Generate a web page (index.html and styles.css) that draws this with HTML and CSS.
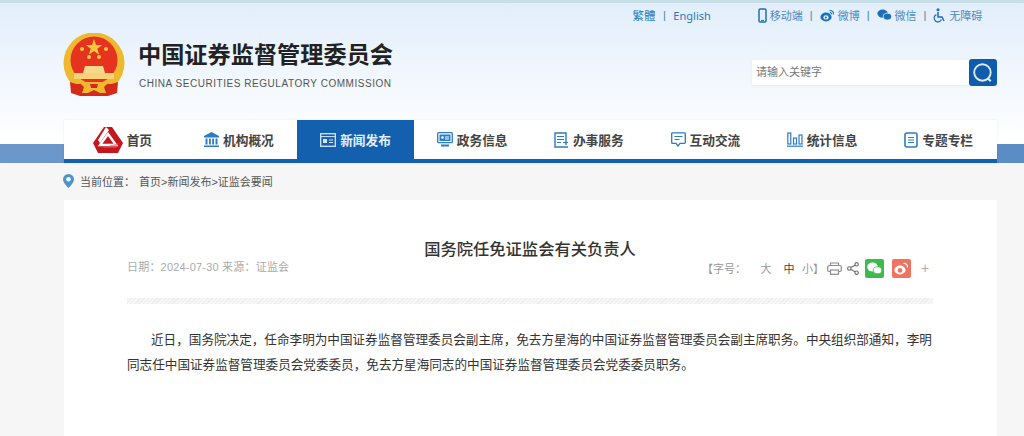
FILE: index.html
```html
<!DOCTYPE html>
<html lang="zh">
<head>
    <meta charset="UTF-8">
    <title>国务院任免证监会有关负责人</title>
    <link rel="stylesheet" href="styles.css">
</head>
<body>
    <div class="header">
        <div class="wrap">
            <div class="top-links">
                <a class="lang">繁體</a><i class="sep sep-lang">|</i><a class="lang lang-en">English</a>
                <span class="top-tools">
                    <a class="tool">
                        <svg width="9" height="15" viewBox="0 0 9 15"><rect x="1" y="1" width="7" height="13" rx="1.2" fill="none" stroke="#1d6fb8" stroke-width="1.5"/><path d="M3 12.4h3" stroke="#1d6fb8"/></svg>移动端</a><i class="sep">|</i>
                    <a class="tool">
                        <svg width="15" height="13" viewBox="0 0 15 13"><ellipse cx="6" cy="8" rx="5.6" ry="4.4" fill="#1d6fb8"/><ellipse cx="6" cy="8.4" rx="2.6" ry="2.2" fill="#eaf3fc"/><circle cx="5.8" cy="8.6" r="1.1" fill="#1d6fb8"/><path d="M9.5 1.5c2.6-.4 4.4 1.6 3.9 4M9.8 3.6c1.2-.2 2 .7 1.8 1.8" fill="none" stroke="#1d6fb8" stroke-width="1.1"/></svg>微博</a><i class="sep">|</i>
                    <a class="tool">
                        <svg width="15" height="12" viewBox="0 0 15 12"><ellipse cx="5.6" cy="4.6" rx="5.2" ry="4.2" fill="#1d6fb8"/><ellipse cx="10.4" cy="7.6" rx="4.2" ry="3.4" fill="#1d6fb8" stroke="#eaf3fc" stroke-width=".8"/></svg>微信</a><i class="sep">|</i>
                    <a class="tool">
                        <svg width="13" height="15" viewBox="0 0 13 15"><circle cx="5" cy="1.8" r="1.5" fill="#1d6fb8"/><path d="M5 4v5h4l2 4" fill="none" stroke="#1d6fb8" stroke-width="1.5"/><path d="M3.4 6.6a3.8 3.8 0 1 0 5 5" fill="none" stroke="#1d6fb8" stroke-width="1.2"/></svg>无障碍</a>
                </span>
            </div>
            <div class="brand-row">
                <svg class="emblem" width="62" height="64" viewBox="0 0 62 64">
                    <circle cx="31" cy="30" r="30.5" fill="#efb92f"/>
                    <circle cx="31" cy="27" r="23.5" fill="#e5331f"/>
                    <path d="m31 6 2 6h6.300l-5 3.700 1.900 6-5.200-3.700-5.200 3.700 1.900-6-5-3.700H29z" fill="#f6c93c"/>
                    <g fill="#f6c93c">
                        <circle cx="19" cy="16" r="2"/><circle cx="43" cy="16" r="2"/>
                        <circle cx="26" cy="24" r="2"/><circle cx="36" cy="24" r="2"/>
                    </g>
                    <path d="M22 33h18l2 7H20z" fill="#f7d98c"/>
                    <path d="M11 40h40v6H11z" fill="#f7d27a"/>
                    <path d="M7 49c5 2 10 3 14 1l20 0c4 2 9 1 14-1l-1 11-9 3H17l-9-3z" fill="#d42a1b"/>
                    <path d="M16 49h30l-5 5 2 6h-6l-6-3-6 3h-6l2-6z" fill="#efb92f"/>
                    <path d="M27 51h8l-1 4h-6z" fill="#d42a1b"/>
                </svg>
                <div class="brand-text">
                    <div class="brand-cn">中国证券监督管理委员会</div>
                    <div class="brand-en">CHINA SECURITIES REGULATORY COMMISSION</div>
                </div>
                <div class="search">
                    <div class="search-input">请输入关键字</div>
                    <div class="search-btn">
                        <svg width="22" height="22" viewBox="0 0 20 20"><circle cx="9.500" cy="9.500" r="7.500" fill="none" stroke="#dcebf8" stroke-width="1.700"/><path d="m14.500 15 2.500 2.500" stroke="#dcebf8" stroke-width="2"/></svg>
                    </div>
                </div>
            </div>
            <div class="nav">
                <a class="nav-item">
                    <svg width="30" height="28" viewBox="0 0 30 28">
                        <path d="M11 1h8l11 16-5 10H5L0 17z" fill="#c6161d"/>
                        <path d="M15 8l8 11H7z" fill="none" stroke="#fff" stroke-width="2.400"/>
                        <path d="M13 1 5 14l2 3 9-13z" fill="#fff"/>
                        <path d="M26 17 8 22h15z" fill="#e8555b" opacity=".6"/>
                    </svg>首页</a>
                <a class="nav-item">
                    <svg width="15" height="15" viewBox="0 0 15 15" fill="#2b7cc0"><path d="M7.500 0 15 4v1.500H0V4z"/><path d="M1.500 6.500h2v6h-2zM5 6.500h1.800v6H5zM8.200 6.500H10v6H8.200zM11.500 6.500h2v6h-2zM0 13.500h15V15H0z"/></svg>机构概况</a>
                <a class="nav-item active">
                    <svg width="16" height="14" viewBox="0 0 16 14"><rect x=".7" y=".7" width="14.600" height="12.600" fill="none" stroke="#d5e6f6" stroke-width="1.300"/><path d="M1 3.600h14" stroke="#d5e6f6"/><rect x="3" y="6" width="4" height="4" fill="#d5e6f6"/><path d="M9 7h4M9 9.500h4" stroke="#d5e6f6"/></svg>新闻发布</a>
                <a class="nav-item">
                    <svg width="16" height="15" viewBox="0 0 16 15"><rect x=".7" y=".7" width="14.600" height="10" rx="1" fill="none" stroke="#2b7cc0" stroke-width="1.300"/><rect x="2.500" y="2.500" width="11" height="6.500" fill="#2b7cc0"/><circle cx="5.500" cy="5.500" r="1.300" fill="#fff"/><path d="M8 5h4M8 7h4" stroke="#fff"/><path d="M4 13.500h8" stroke="#2b7cc0" stroke-width="2"/></svg>政务信息</a>
                <a class="nav-item">
                    <svg width="15" height="16" viewBox="0 0 15 16"><path d="M12 13V1H1v14h13" fill="none" stroke="#2b7cc0" stroke-width="1.400"/><path d="M3 4.500h7M3 7.500h7M3 10.500h4M9 10.500h5" stroke="#2b7cc0" stroke-width="1.200"/></svg>办事服务</a>
                <a class="nav-item">
                    <svg width="15" height="15" viewBox="0 0 15 15"><path d="M1.500.8h12a.8.8 0 0 1 .8.8v9a.8.800 0 0 1-.8.800H9l-2 2.600-2-2.600H1.500a.8.800 0 0 1-.8-.8v-9a.8.800 0 0 1 .8-.8z" fill="none" stroke="#2b7cc0" stroke-width="1.300"/><path d="M3.500 4.500h8M3.500 7.500h5" stroke="#2b7cc0" stroke-width="1.200"/></svg>互动交流</a>
                <a class="nav-item">
                    <svg width="16" height="15" viewBox="0 0 16 15" fill="none" stroke="#2b7cc0" stroke-width="1.200"><rect x=".8" y="1" width="3" height="11"/><rect x="6.500" y="6" width="3" height="6"/><rect x="12" y="3" width="3" height="9"/><path d="M0 14.200h16"/></svg>统计信息</a>
                <a class="nav-item">
                    <svg width="14" height="16" viewBox="0 0 14 16"><path d="M3 1h8.500A1.500 1.500 0 0 1 13 2.500V13a2 2 0 0 1-2 2H3a2 2 0 0 1-2-2V3a2 2 0 0 1 2-2z" fill="none" stroke="#2b7cc0" stroke-width="1.600"/><path d="M4 5.500h6M4 8h6M4 10.500h6" stroke="#2b7cc0" stroke-width="1.200"/></svg>专题专栏</a>
            </div>
        </div>
    </div>

    <div class="wrap">
        <div class="crumbs">
            <svg class="pin" width="11" height="14" viewBox="0 0 11 14"><path d="M5.500 0A5.500 5.500 0 0 0 0 5.500C0 9 5.500 14 5.500 14S11 9 11 5.500A5.500 5.500 0 0 0 5.500 0z" fill="#4d94c8"/><circle cx="5.500" cy="5.300" r="2.300" fill="#f6f6f6"/></svg>
            <span class="crumbs-label">当前位置：</span>
            <span>首页&gt;新闻发布&gt;证监会要闻</span>
        </div>
        <div class="article">
            <h1>国务院任免证监会有关负责人</h1>
            <div class="meta">
                <div class="meta-date">日期：2024-07-30 来源：证监会</div>
                <div class="meta-tools">
                    <span class="font-label">【字号：</span>
                    <span class="font-size">大</span>
                    <span class="font-size current">中</span>
                    <span class="font-size small">小】</span>
                    <svg class="print" width="15" height="13" viewBox="0 0 15 13" fill="none" stroke="#8a8a8a" stroke-width="1.200"><path d="M3.500 3.500V1h8v2.500"/><rect x=".7" y="3.500" width="13.600" height="6" rx="1.500"/><rect x="3.500" y="8" width="8" height="4.300" fill="#fff"/></svg>
                    <svg class="share" width="12" height="13" viewBox="0 0 12 13" fill="none" stroke="#6f6f6f" stroke-width="1.100"><circle cx="2.300" cy="6.500" r="1.700"/><circle cx="9.600" cy="2.300" r="1.700"/><circle cx="9.600" cy="10.700" r="1.700"/><path d="m3.800 5.600 4.300-2.400M3.800 7.400l4.300 2.400"/></svg>
                    <span class="badge badge-wx">
                        <svg width="15" height="13" viewBox="0 0 15 13" fill="#fff"><ellipse cx="5.500" cy="5" rx="5.300" ry="4.500"/><ellipse cx="10.500" cy="8.300" rx="4.300" ry="3.500" stroke="#3dba4e" stroke-width=".8"/></svg>
                    </span>
                    <span class="badge badge-wb">
                        <svg width="15" height="13" viewBox="0 0 15 13"><ellipse cx="6" cy="8" rx="5.600" ry="4.400" fill="#fff"/><circle cx="6" cy="8.400" r="2.300" fill="#ef7360"/><path d="M9.500 1.500c2.600-.4 4.400 1.600 3.900 4" fill="none" stroke="#fff" stroke-width="1.200"/></svg>
                    </span>
                    <span class="more">+</span>
                </div>
            </div>
            <div class="divider"></div>
            <div class="content">
                <p>近日，国务院决定，任命李明为中国证券监督管理委员会副主席，免去方星海的中国证券监督管理委员会副主席职务。中央组织部通知，李明同志任中国证券监督管理委员会党委委员，免去方星海同志的中国证券监督管理委员会党委委员职务。</p>
            </div>
        </div>
    </div>
</body>
</html>
```

FILE: styles.css
```css
html, body {
    margin: 0;
    padding: 0;
}
body {
    height: 436px;
    overflow: hidden;
    background: #f6f6f6;
    color: #333;
    font-family: "Liberation Sans", "Noto Sans CJK SC", sans-serif;
}
.wrap {
    width: 933px;
    margin-left: 64px;
}
.header {
    height: 160px;
    border-top: 3px solid #c6dfe6;
    background:
        linear-gradient(90deg, #6c97cb 0%, #5b8cc4 100%) bottom / 100% 19px no-repeat,
        linear-gradient(180deg, #e2eefb 0%, #ffffff 100%) top / 100% 141px no-repeat,
        #fff;
}

/* top links */
.top-links {
    display: flex;
    align-items: center;
    height: 24px;
    padding-left: 568.500px;
    font-size: 11px;
    color: #2a78b9;
}
.lang {
    font-size: 11.500px;
}
.lang-en {
    font-family: "Noto Sans", sans-serif;
    font-size: 11px;
}
.sep {
    font-style: normal;
    margin: 0 7px;
    color: #4d7ea8;
    font-size: 11px;
}
.sep-lang {
    margin: 0 7.500px;
}
.top-tools {
    display: flex;
    align-items: center;
    margin-left: 47px;
    color: #4b8ac2;
}
.tool {
    display: flex;
    align-items: center;
    gap: 3px;
    white-space: nowrap;
}

/* logo + search */
.brand-row {
    display: flex;
    align-items: flex-start;
    height: 93px;
}
.emblem {
    margin-top: 6px;
    margin-left: -1px;
}
.brand-text {
    margin-left: 13px;
    margin-top: 13px;
}
.brand-cn {
    font-size: 23.200px;
    line-height: 30px;
    font-weight: 700;
    color: #222;
    white-space: nowrap;
}
.brand-en {
    margin-top: 8px;
    margin-left: 1px;
    font-size: 10px;
    line-height: 12px;
    letter-spacing: 0.540px;
    color: #555;
    white-space: nowrap;
}
.search {
    display: flex;
    align-items: center;
    margin-left: auto;
    margin-top: 32px;
}
.search-input {
    width: 213px;
    height: 25px;
    padding-left: 4px;
    background: #fff;
    font-size: 11px;
    line-height: 25px;
    color: #777;
    box-shadow: 0 1px 3px rgba(0,0,0,0.05);
}
.search-btn {
    display: flex;
    align-items: center;
    justify-content: center;
    width: 28px;
    height: 27px;
    border-radius: 3px;
    background: #0f5cab;
}

/* main nav */
.nav {
    display: grid;
    grid-template-columns: repeat(8, 1fr);
    height: 39px;
    background: #fff;
    border-bottom: 4px solid #1260ae;
    box-shadow: 0 0 2px rgba(0,0,0,0.08);
}
.nav-item {
    display: flex;
    align-items: center;
    justify-content: center;
    gap: 4px;
    font-size: 12.700px;
    font-weight: 700;
    color: #444;
    white-space: nowrap;
}
.nav-item.active {
    background: #1260ae;
    color: #e6f0fa;
}

/* breadcrumb */
.crumbs {
    display: flex;
    align-items: center;
    height: 36px;
    padding-bottom: 1px;
    font-size: 11px;
    color: #555;
}
.pin {
    margin-left: -1px;
}
.crumbs-label {
    margin-left: 6px;
    margin-right: 1px;
    width: 58px;
}

/* article */
.article {
    height: 236px;
    padding: 0 64px 0 63px;
    background: #fff;
}
.article h1 {
    margin: 0;
    padding-top: 37px;
    font-size: 16.300px;
    line-height: 24px;
    font-weight: 500;
    color: #333;
    text-align: center;
}
.meta {
    display: flex;
    align-items: center;
    justify-content: space-between;
    height: 20px;
    margin-top: -5px;
    font-size: 11px;
    color: #aaa;
}
.meta-date {
    letter-spacing: 0.2px;
}
.meta-tools {
    display: flex;
    align-items: center;
    gap: 3px;
    margin-top: 4px;
}
.font-label {
    margin-right: 7px;
    color: #999;
}
.font-size {
    width: 20px;
    text-align: center;
    color: #999;
}
.font-size.current {
    color: #444;
}
.font-size.small {
    width: 22px;
}
.share {
    margin-left: 2px;
}
.badge {
    display: flex;
    align-items: center;
    justify-content: center;
    width: 19px;
    height: 19px;
    margin-left: 3px;
    border-radius: 2px;
}
.badge-wx {
    background: #3dba4e;
}
.badge-wb {
    background: #ef7360;
    margin-left: 5px;
}
.more {
    margin-left: 7px;
    font-size: 14px;
    color: #aaa;
    width: 12px;
}
.divider {
    height: 6px;
    margin-top: 22px;
    background: repeating-linear-gradient(135deg, #eeeeee 0, #eeeeee 1px, #f6f6f6 1px, #f6f6f6 3px);
}
.content {
    margin-top: 24px;
    font-size: 12.600px;
    line-height: 25px;
    color: #333;
}
.content p {
    margin: 0;
    text-indent: 24px;
}
```
